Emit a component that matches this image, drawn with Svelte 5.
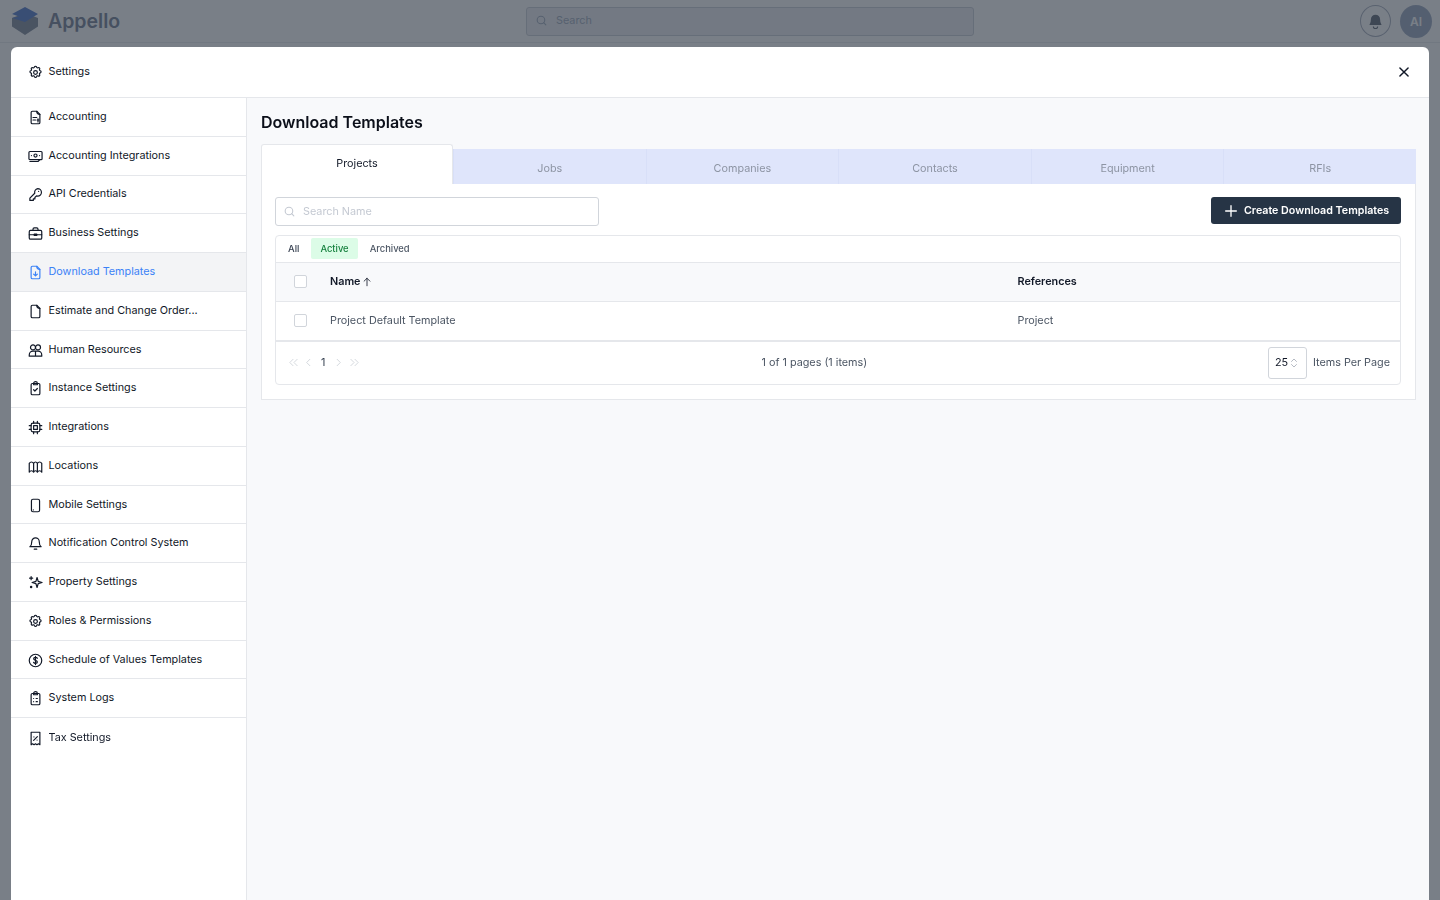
<script>
	const items = [
		{ label: 'Accounting', icon: 'doc' },
		{ label: 'Accounting Integrations', icon: 'screen' },
		{ label: 'API Credentials', icon: 'key' },
		{ label: 'Business Settings', icon: 'case' },
		{ label: 'Download Templates', icon: 'download', active: true },
		{ label: 'Estimate and Change Order...', icon: 'file' },
		{ label: 'Human Resources', icon: 'people' },
		{ label: 'Instance Settings', icon: 'clipcheck' },
		{ label: 'Integrations', icon: 'chip' },
		{ label: 'Locations', icon: 'map' },
		{ label: 'Mobile Settings', icon: 'phone' },
		{ label: 'Notification Control System', icon: 'bell' },
		{ label: 'Property Settings', icon: 'spark' },
		{ label: 'Roles & Permissions', icon: 'gear' },
		{ label: 'Schedule of Values Templates', icon: 'dollar' },
		{ label: 'System Logs', icon: 'cliplist' },
		{ label: 'Tax Settings', icon: 'receipt' }
	];

	const tabs = ['Jobs', 'Companies', 'Contacts', 'Equipment', 'RFIs'];

	const gear =
		'M10.3 3.2c.4-1.6 2.9-1.6 3.4 0a1.7 1.7 0 0 0 2.6 1.1c1.4-.9 3.2.8 2.3 2.3a1.7 1.7 0 0 0 1.1 2.6c1.6.4 1.6 2.9 0 3.4a1.7 1.7 0 0 0-1.1 2.6c.9 1.4-.8 3.2-2.3 2.3a1.7 1.7 0 0 0-2.6 1.1c-.4 1.6-2.9 1.6-3.4 0a1.7 1.7 0 0 0-2.6-1.1c-1.4.9-3.2-.8-2.3-2.3a1.7 1.7 0 0 0-1.1-2.6c-1.6-.4-1.6-2.9 0-3.4a1.7 1.7 0 0 0 1.1-2.6c-.9-1.4.8-3.2 2.3-2.3a1.7 1.7 0 0 0 2.6-1.1Z';
</script>

{#snippet icon(name)}
	<svg class="nav-icon" viewBox="0 0 24 24" fill="none" stroke="currentColor" stroke-width="2" stroke-linecap="round" stroke-linejoin="round">
		{#if name === 'doc'}
			<path d="M14 2H7a2 2 0 0 0-2 2v16a2 2 0 0 0 2 2h10a2 2 0 0 0 2-2V7Z" />
			<path d="M14 2c0 3 1.5 5 5 5M8 12h6M8 16h4M16 14v5M14.5 16h3" />
		{:else if name === 'screen'}
			<rect x="1.5" y="4" width="21" height="13" rx="1.5" />
			<circle cx="12" cy="10.5" r="2.5" />
			<path d="M5.5 10.5h.01M18.5 10.5h.01M3 20h13l3-3" />
		{:else if name === 'key'}
			<path d="M15.5 2.5a6 6 0 0 1 0 12c-.7 0-1.3-.1-1.9-.3L11 16.8V19H8.5v2.5H3v-3.7l7.8-7.8a6 6 0 0 1 4.700-7.500Z" />
			<path d="M17 7h.01" />
		{:else if name === 'case'}
			<rect x="2" y="7" width="20" height="14" rx="2" />
			<path d="M16 7V5a2 2 0 0 0-2-2h-4a2 2 0 0 0-2 2v2M2 14h7M15 14h7M10 13h4v2h-4z" />
		{:else if name === 'download'}
			<path d="M14 2H7a2 2 0 0 0-2 2v16a2 2 0 0 0 2 2h10a2 2 0 0 0 2-2V7Z" />
			<path d="M14 2c0 3 1.5 5 5 5M12 11v6M9 14.5l3 3 3-3" />
		{:else if name === 'file'}
			<path d="M14 2H7a2 2 0 0 0-2 2v16a2 2 0 0 0 2 2h10a2 2 0 0 0 2-2V7Z" />
			<path d="M14 2c0 3 1.5 5 5 5" />
		{:else if name === 'people'}
			<rect x="4" y="3" width="8" height="8" rx="4" />
			<rect x="12" y="3" width="8" height="8" rx="4" />
			<path d="M2 21v-2a6 6 0 0 1 6-6h8a6 6 0 0 1 6 6v2ZM12 13v8" />
		{:else if name === 'clipcheck'}
			<rect x="5" y="4" width="14" height="18" rx="2" />
			<path d="M9 4a3 3 0 0 1 6 0v2H9ZM9 14l2 2 4-4" />
		{:else if name === 'chip'}
			<rect x="5" y="5" width="14" height="14" rx="3" />
			<rect x="9" y="9" width="6" height="6" />
			<path d="M9 2v3M15 2v3M9 19v3M15 19v3M2 9h3M2 15h3M19 9h3M19 15h3" />
		{:else if name === 'map'}
			<path d="M2 7c2-3 5-3 7 0v14c-2-3-5-3-7 0ZM9 7c1.5-3 4.5-3 6 0v14c-1.5-3-4.5-3-6 0ZM15 7c2-3 5-3 7 0v14c-2-3-5-3-7 0Z" />
		{:else if name === 'phone'}
			<rect x="5.5" y="2" width="13" height="20" rx="2.5" />
			<path d="M8.5 19h.01" />
		{:else if name === 'bell'}
			<path d="M6 9a6 6 0 0 1 12 0c0 6 3 8 3 8H3s3-2 3-8ZM10 21h4" />
		{:else if name === 'spark'}
			<path d="M14.5 4l1.8 6.200L22.5 12l-6.200 1.800L14.500 20l-1.800-6.200L6.500 12l6.200-1.800Z" />
			<path d="M5 2.5v5M2.5 5h5" />
			<circle cx="5" cy="19" r="2" fill="currentColor" stroke="none" />
		{:else if name === 'gear'}
			<path d={gear} />
			<circle cx="12" cy="12" r="3" />
		{:else if name === 'dollar'}
			<circle cx="12" cy="12" r="10" />
			<path d="M15 8.5c-.5-1-1.600-1.500-3-1.500-1.700 0-3 .9-3 2.300 0 3.200 6 1.800 6 5 0 1.400-1.300 2.200-3 2.200-1.400 0-2.500-.5-3-1.500M12 5.500v13" />
		{:else if name === 'cliplist'}
			<rect x="5" y="4" width="14" height="18" rx="2" />
			<path d="M9 4a3 3 0 0 1 6 0v2H9ZM9 12h.01M9 17h.01M13 12h2M13 17h2" />
		{:else if name === 'receipt'}
			<path d="M5 2h14v20l-2.300-1.500L14.300 22 12 20.500 9.700 22l-2.400-1.500L5 22Z" />
			<path d="M9 15l6-6M9.5 9.5h.01M14.5 14.5h.01" />
		{/if}
	</svg>
{/snippet}

<div class="page">
	<header class="topbar">
		<div class="brand">
			<svg class="logo" viewBox="0 0 28 28">
				<path d="M1 11 14 6l13 5v8.500L14 28 1 19.500Z" fill="#8b93a2" />
				<path d="M14 0 27 7 14 15 1 11 8 9.500 1 7Z" fill="#5f84d0" />
			</svg>
			<span>Appello</span>
		</div>
		<div class="global-search">
			<svg viewBox="0 0 24 24" fill="none" stroke="currentColor" stroke-width="2" stroke-linecap="round"><circle cx="11" cy="11" r="7" /><path d="m20 20-4-4" /></svg>
			<span>Search</span>
		</div>
		<div class="top-actions">
			<div class="bell">
				<svg viewBox="0 0 24 24" fill="currentColor"><path d="M12 2.5a6.5 6.5 0 0 0-6.5 6.5c0 5-2 6.5-2 8h17c0-1.500-2-3-2-8A6.500 6.500 0 0 0 12 2.500Z" /><path d="M9 19a3 3 0 0 0 6 0" fill="none" stroke="currentColor" stroke-width="1.5" /></svg>
			</div>
			<div class="avatar">AI</div>
		</div>
	</header>
</div>

<div class="overlay"></div>

<div class="modal">
	<div class="modal-head">
		<div class="modal-title">
			<svg class="nav-icon" viewBox="0 0 24 24" fill="none" stroke="currentColor" stroke-width="2" stroke-linecap="round" stroke-linejoin="round"><path d={gear} /><circle cx="12" cy="12" r="3" /></svg>
			<span>Settings</span>
		</div>
		<svg class="close" viewBox="0 0 24 24" fill="none" stroke="currentColor" stroke-width="2.5" stroke-linecap="round"><path d="M5 5l14 14M19 5 5 19" /></svg>
	</div>

	<div class="modal-body">
		<nav class="sidebar">
			{#each items as item}
				<div class="nav-row" class:active={item.active}>
					{@render icon(item.icon)}
					<span>{item.label}</span>
				</div>
			{/each}
		</nav>

		<main class="content">
			<h1>Download Templates</h1>

			<div class="tabs">
				<div class="tab current">Projects</div>
				{#each tabs as tab}
					<div class="tab">{tab}</div>
				{/each}
			</div>

			<section class="panel">
				<div class="toolbar">
					<div class="search">
						<svg viewBox="0 0 24 24" fill="none" stroke="currentColor" stroke-width="2" stroke-linecap="round"><circle cx="11" cy="11" r="7" /><path d="m20 20-4-4" /></svg>
						<span>Search Name</span>
					</div>
					<button class="create">
						<svg viewBox="0 0 24 24" fill="none" stroke="currentColor" stroke-width="2" stroke-linecap="round"><path d="M12 4v16M4 12h16" /></svg>
						Create Download Templates
					</button>
				</div>

				<div class="table-card">
					<div class="filters">
						<span class="filter all">All</span>
						<span class="filter on">Active</span>
						<span class="filter">Archived</span>
					</div>
					<div class="row head">
						<div class="check-cell"><span class="check"></span></div>
						<div class="name-cell">Name
							<svg viewBox="0 0 24 24" fill="none" stroke="currentColor" stroke-width="2" stroke-linecap="round" stroke-linejoin="round"><path d="M12 21V3M5 10l7-7 7 7" /></svg>
						</div>
						<div>References</div>
					</div>
					<div class="row">
						<div class="check-cell"><span class="check"></span></div>
						<div class="name-cell">Project Default Template</div>
						<div>Project</div>
					</div>
					<div class="pager">
						<div class="pages">
							<svg viewBox="0 0 24 24" fill="none" stroke="currentColor" stroke-width="2" stroke-linecap="round" stroke-linejoin="round"><path d="M11 5l-7 7 7 7M20 5l-7 7 7 7" /></svg>
							<svg viewBox="0 0 24 24" fill="none" stroke="currentColor" stroke-width="2" stroke-linecap="round" stroke-linejoin="round"><path d="M15 5l-7 7 7 7" /></svg>
							<span class="num">1</span>
							<svg viewBox="0 0 24 24" fill="none" stroke="currentColor" stroke-width="2" stroke-linecap="round" stroke-linejoin="round"><path d="M9 5l7 7-7 7" /></svg>
							<svg class="last" viewBox="0 0 24 24" fill="none" stroke="currentColor" stroke-width="2" stroke-linecap="round" stroke-linejoin="round"><path d="M4 5l7 7-7 7M13 5l7 7-7 7" /></svg>
						</div>
						<div class="count">1 of 1 pages (1 items)</div>
						<div class="per-page">
							<div class="select">25
								<svg viewBox="0 0 24 24" fill="none" stroke="currentColor" stroke-width="2" stroke-linecap="round" stroke-linejoin="round"><path d="M7 9l5-5 5 5M7 15l5 5 5-5" /></svg>
							</div>
							<span>Items Per Page</span>
						</div>
					</div>
				</div>
			</section>
		</main>
	</div>
</div>

<style>
	:global(body) {
		margin: 0;
		font-family: Inter, 'Noto Sans', sans-serif;
		overflow: hidden;
	}

	.page {
		height: 900px;
		background: #fff;
	}

	.topbar {
		height: 42px;
		display: grid;
		grid-template-columns: 526px 448px 1fr;
		align-items: center;
		padding-right: 8px;
		border-bottom: 1px solid #eceef1;
	}

	.brand {
		display: flex;
		align-items: center;
		gap: 9px;
		padding-left: 11px;
		color: #7f8a9e;
		font-size: 19.5px;
		font-weight: 600;
	}

	.logo {
		width: 28px;
		height: 28px;
	}

	.global-search {
		height: 29px;
		box-sizing: border-box;
		display: flex;
		align-items: center;
		gap: 8px;
		padding: 0 0 1px 8px;
		background: #f0f1f4;
		border: 1px solid #d0d4db;
		border-radius: 3px;
		color: #a9b3c4;
		font-size: 10.8px;
	}

	.global-search svg {
		width: 13px;
		height: 13px;
	}

	.top-actions {
		display: flex;
		justify-content: flex-end;
		align-items: center;
		gap: 9px;
	}

	.bell {
		width: 31px;
		height: 32px;
		box-sizing: border-box;
		display: flex;
		align-items: center;
		justify-content: center;
		border: 1px solid #b0b6c4;
		border-radius: 50%;
		color: #6b7380;
	}

	.bell svg {
		width: 17px;
		height: 17px;
	}

	.avatar {
		width: 32px;
		height: 33px;
		display: flex;
		align-items: center;
		justify-content: center;
		border-radius: 50%;
		background: #a4b0c6;
		color: #fff;
		font-size: 12px;
		font-weight: 600;
	}

	.overlay {
		position: fixed;
		inset: 0;
		background: rgba(31, 41, 55, 0.6);
	}

	.modal {
		position: fixed;
		left: 11px;
		right: 11px;
		top: 47px;
		bottom: 0;
		display: flex;
		flex-direction: column;
		background: #fff;
		border-radius: 6px 6px 0 0;
		color: #111827;
		font-size: 10.8px;
	}

	.modal-head {
		height: 51px;
		flex: none;
		box-sizing: border-box;
		display: flex;
		align-items: center;
		justify-content: space-between;
		padding: 0 18px 0 16.5px;
		border-bottom: 1px solid #e5e7eb;
	}

	.modal-title {
		display: flex;
		align-items: center;
		gap: 6px;
		padding-bottom: 1px;
		color: #111827;
	}

	.close {
		width: 14px;
		height: 14px;
		color: #111827;
	}

	.modal-body {
		flex: 1;
		display: flex;
		min-height: 0;
	}

	.sidebar {
		width: 236px;
		flex: none;
		box-sizing: border-box;
		background: #fff;
		border-right: 1px solid #e5e7eb;
	}

	.nav-row {
		height: 38.78px;
		box-sizing: border-box;
		display: flex;
		align-items: center;
		gap: 6px;
		padding: 0 0 0.85px 16.5px;
		border-bottom: 1px solid #e5e7eb;
		color: #111827;
	}

	.nav-row:last-child {
		border-bottom: 0;
	}

	.nav-row.active {
		background: #f3f4f6;
		color: #3b82f6;
	}

	.nav-icon {
		width: 15px;
		height: 15px;
		flex: none;
		margin-top: 2px;
		stroke-width: 1.9;
	}

	.content {
		flex: 1;
		min-width: 0;
		box-sizing: border-box;
		padding: 14px 13px 0 14px;
		background: #f8f9fb;
	}

	h1 {
		margin: 0 0 11px;
		color: #0b0f19;
		font-size: 16px;
		line-height: 21px;
		font-weight: 600;
	}

	.tabs {
		height: 40px;
		display: grid;
		grid-template-columns: 192px repeat(5, 192.6px);
		align-items: end;
	}

	.tab {
		height: 35px;
		box-sizing: border-box;
		display: flex;
		align-items: center;
		justify-content: center;
		padding-top: 4px;
		background: #dfe5fb;
		border-left: 1px solid #d8dff8;
		color: #8d94a3;
	}

	.tab.current {
		height: 40px;
		padding: 0 0 2px;
		background: #fff;
		border: 1px solid #e5e7eb;
		border-bottom: 0;
		border-radius: 3px 3px 0 0;
		color: #111827;
	}

	.panel {
		box-sizing: border-box;
		height: 216px;
		padding: 13px 14px 14px 13px;
		background: #fff;
		border: 1px solid #e5e7eb;
		border-top: 0;
	}

	.toolbar {
		height: 29px;
		display: flex;
		justify-content: space-between;
		align-items: flex-start;
		margin-bottom: 9px;
	}

	.search {
		width: 324px;
		height: 29px;
		box-sizing: border-box;
		display: flex;
		align-items: center;
		gap: 7px;
		padding-left: 7px;
		border: 1px solid #d1d5db;
		border-radius: 3px;
		color: #c4c9d2;
	}

	.search svg {
		width: 13px;
		height: 13px;
	}

	.create {
		width: 190px;
		height: 27px;
		display: flex;
		align-items: center;
		gap: 5px;
		padding: 0 0 0 12px;
		background: #263445;
		border: 0;
		border-radius: 3px;
		color: #fff;
		font: 600 10.7px Inter, sans-serif;
	}

	.create svg {
		width: 16px;
		height: 16px;
	}

	.table-card {
		border: 1px solid #e5e7eb;
		border-radius: 4px;
	}

	.filters {
		height: 26px;
		box-sizing: border-box;
		display: flex;
		align-items: center;
		gap: 3px;
		padding: 0 0 1px 3px;
		font-size: 9.4px;
		font-weight: 500;
		color: #4b5563;
	}

	.filter {
		padding: 0 9px;
		height: 21px;
		display: flex;
		align-items: center;
		border-radius: 2px;
	}

	.filter.all {
		color: #374151;
	}

	.filter.on {
		background: #dcfce7;
		color: #15803d;
	}

	.row {
		height: 39px;
		box-sizing: border-box;
		display: grid;
		grid-template-columns: 54px 687.5px 1fr;
		align-items: center;
		padding-bottom: 2px;
		border-top: 1px solid #e5e7eb;
		color: #4b5563;
	}

	.row.head {
		background: #f8f9fb;
		color: #111827;
		font-weight: 600;
	}

	.check-cell {
		display: flex;
		justify-content: center;
		padding-right: 6px;
	}

	.check {
		width: 11px;
		height: 11px;
		border: 1px solid #d1d5db;
		border-radius: 2px;
		background: #fff;
	}

	.name-cell {
		display: flex;
		align-items: center;
		gap: 1px;
	}

	.name-cell svg {
		width: 10px;
		height: 10px;
		margin-top: 1px;
	}

	.pager {
		height: 44px;
		box-sizing: border-box;
		display: flex;
		justify-content: space-between;
		align-items: center;
		padding: 0 10px 0 12px;
		border-top: 2px solid #e5e7eb;
		color: #4b5563;
	}

	.pages {
		display: flex;
		align-items: center;
		gap: 4px;
		color: #d1d5db;
		padding-bottom: 1px;
	}

	.pages svg {
		width: 11px;
		height: 11px;
	}

	.pages .last {
		margin-left: 1px;
	}

	.num {
		margin: 0 4px 0 3px;
		color: #374151;
	}

	.count {
		padding-bottom: 1px;
	}

	.per-page {
		display: flex;
		align-items: center;
		gap: 5.5px;
	}

	.per-page span {
		padding-bottom: 1px;
	}

	.select {
		width: 39px;
		height: 32px;
		box-sizing: border-box;
		display: flex;
		align-items: center;
		padding: 0 0 1px 5.5px;
		border: 1px solid #d1d5db;
		border-radius: 3px;
		color: #111827;
	}

	.select svg {
		width: 12px;
		height: 12px;
		color: #9ca3af;
		stroke-width: 1.5;
	}
</style>
